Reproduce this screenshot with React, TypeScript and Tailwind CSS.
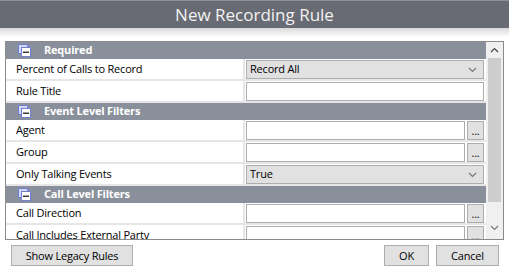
import React from 'react';

type Row =
  | { kind: 'header'; label: string }
  | { kind: 'select'; label: string; value: string }
  | { kind: 'text'; label: string }
  | { kind: 'picker'; label: string };

const rows: Row[] = [
  { kind: 'header', label: 'Required' },
  { kind: 'select', label: 'Percent of Calls to Record', value: 'Record All' },
  { kind: 'text', label: 'Rule Title' },
  { kind: 'header', label: 'Event Level Filters' },
  { kind: 'picker', label: 'Agent' },
  { kind: 'picker', label: 'Group' },
  { kind: 'select', label: 'Only Talking Events', value: 'True' },
  { kind: 'header', label: 'Call Level Filters' },
  { kind: 'picker', label: 'Call Direction' },
  { kind: 'picker', label: 'Call Includes External Party' },
];

// collapse icon used in the section headers
const CollapseIcon = () => (
  <svg width="13" height="13" viewBox="0 0 13 13" className="shrink-0">
    <rect x="0.5" y="0.5" width="9" height="9" fill="#d4d8f4" stroke="#6f7fd6" />
    <rect x="3.5" y="3.5" width="9" height="9" fill="#ffffff" stroke="#6f7fd6" />
    <rect x="5" y="7.5" width="6" height="1.5" fill="#3a3a3a" />
  </svg>
);

const Chevron = ({ up }: { up?: boolean }) => (
  <svg width="9" height="6" viewBox="0 0 9 6">
    <path d={up ? 'M1 5 L4.5 1.5 L8 5' : 'M1 1 L4.5 4.5 L8 1'} fill="none" stroke={up ? '#444' : '#777'} strokeWidth="1.2" />
  </svg>
);

const DotsButton = () => (
  <div className="w-[17px] h-[19px] ml-[2px] border border-[#adadad] bg-[#e1e1e1] flex items-end justify-center pb-[3px] text-[11px] leading-none text-black">
    ...
  </div>
);

const ValueCell = ({ row }: { row: Row }) => {
  if (row.kind === 'select') {
    return (
      <div className="flex-1 h-[19px] border border-[#adadad] bg-[#e1e1e1] flex items-center justify-between pl-[3px] pr-[6px] text-black">
        <span>{row.value}</span>
        <Chevron />
      </div>
    );
  }
  if (row.kind === 'picker') {
    return (
      <div className="flex-1 flex">
        <div className="flex-1 h-[19px] border border-[#adadad] bg-white" />
        <DotsButton />
      </div>
    );
  }
  return <div className="flex-1 h-[19px] border border-[#adadad] bg-white" />;
};

const App = () => {
  return (
    <div className="w-[509px] h-[280px] bg-white overflow-hidden font-['Open_Sans',sans-serif] text-[11px] tracking-[-0.2px]">
      {/* Title bar */}
      <div className="h-[28px] bg-[#686b73] border-t border-[#8d9097] flex items-center justify-center text-[#f2f2f2] text-[17px] tracking-normal leading-none">
        New Recording Rule
      </div>
      <div className="h-[9px] bg-gradient-to-b from-[#d9d9d9] to-white" />

      {/* Property grid */}
      <div className="mt-[4px] mx-[5px] h-[199px] border border-[#8a8a8a] flex overflow-hidden">
        <div className="flex-1 flex flex-col">
          {rows.map((row, i) =>
            row.kind === 'header' ? (
              <div key={i} className="h-[17px] shrink-0 bg-[#8a909b] flex items-center pl-[12px] text-white font-bold">
                <div className="w-[26px] shrink-0 flex items-center">
                  <CollapseIcon />
                </div>
                <span>{row.label}</span>
              </div>
            ) : (
              <div key={i} className="h-[22px] shrink-0 flex border-b-2 border-[#e6e6e6]">
                <div className="w-[239px] border-r-2 border-[#e6e6e6] pl-[10px] flex items-center text-black">
                  {row.label}
                </div>
                <div className="flex-1 flex pl-px pt-px pr-[2px]">
                  <ValueCell row={row} />
                </div>
              </div>
            )
          )}
        </div>
        {/* Scrollbar */}
        <div className="w-[17px] bg-[#f0f0f0] flex flex-col items-center">
          <div className="h-[16px] flex items-center justify-center">
            <Chevron up />
          </div>
          <div className="w-[13px] h-[144px] bg-[#cdcdcd]" />
          <div className="flex-1 flex items-center justify-center pt-[14px]">
            <Chevron />
          </div>
        </div>
      </div>

      {/* Footer */}
      <div className="flex items-center mt-[5px] px-[11px] pr-[10px]">
        <button className="w-[122px] h-[21px] border border-[#adadad] bg-[#e1e1e1] text-black leading-none">
          Show Legacy Rules
        </button>
        <div className="flex-1" />
        <button className="w-[45px] h-[21px] border border-[#adadad] bg-[#e1e1e1] text-black leading-none">
          OK
        </button>
        <button className="w-[63px] h-[21px] ml-[7px] border border-[#adadad] bg-[#e1e1e1] text-black leading-none">
          Cancel
        </button>
      </div>
    </div>
  );
};

export default App;
